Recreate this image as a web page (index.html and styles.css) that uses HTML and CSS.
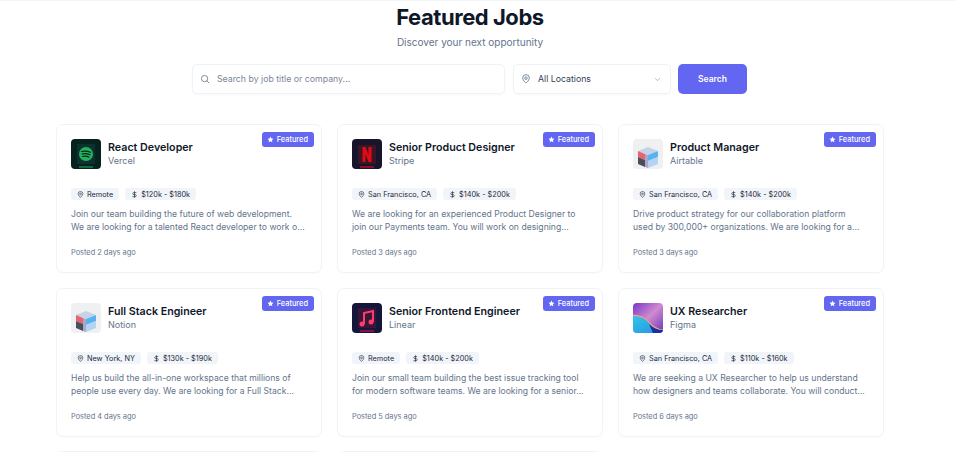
FILE: index.html
```html
<!DOCTYPE html>
<html lang="en">
<head>
<meta charset="utf-8">
<title>Featured Jobs</title>
<link rel="stylesheet" href="styles.css">
</head>
<body>
<svg class="defs" width="0" height="0" aria-hidden="true">
  <defs>
    <symbol id="pin" viewBox="0 0 24 24"><path d="M12 22s8-6.6 8-12.5a8 8 0 0 0-16 0C4 15.400 12 22 12 22z" fill="none" stroke="currentColor" stroke-width="2"/><circle cx="12" cy="10" r="3" fill="none" stroke="currentColor" stroke-width="2"/></symbol>
    <symbol id="dollar" viewBox="0 0 24 24"><path d="M12 2v20M17 5.500H9.500a3.500 3.500 0 0 0 0 7h5a3.500 3.500 0 0 1 0 7H6" fill="none" stroke="currentColor" stroke-width="2.200" stroke-linecap="round"/></symbol>
    <symbol id="star" viewBox="0 0 24 24"><path d="M12 2l3.100 6.600 7.200.9-5.300 5 1.400 7.200L12 18.200l-6.400 3.500L7 14.500l-5.300-5 7.200-.9z" fill="currentColor"/></symbol>
    <symbol id="cube" viewBox="0 0 30 30">
      <rect width="30" height="30" fill="#eff0f2"/>
      <g transform="translate(0 3)">
        <path d="M15 5l10 4-10 4-10-4z" fill="#c5d3e8"/>
        <path d="M5 9l7 3v6l-7-3z" fill="#e8636c"/>
        <path d="M5 15l7 3v7l-7-3z" fill="#4a4d5a"/>
        <path d="M12 12l3 1v13l-3-1z" fill="#a9a6d0"/>
        <path d="M15 13l10-4v6l-10 4z" fill="#58b2f2"/>
        <path d="M15 19l10-4v7l-10 4z" fill="#b4d4f2"/>
      </g>
    </symbol>
    <linearGradient id="figma-sky" x1="0" y1="0" x2="1" y2="1"><stop offset="0" stop-color="#7a34c8"/><stop offset=".5" stop-color="#d08ad0"/><stop offset="1" stop-color="#6a35b8"/></linearGradient>
    <linearGradient id="figma-sea" x1="0" y1="0" x2="1" y2="1"><stop offset="0" stop-color="#2fc8ea"/><stop offset="1" stop-color="#2a90e0"/></linearGradient>
  </defs>
</svg>

<main class="page">
  <header class="hero">
    <h1 class="hero-title">Featured Jobs</h1>
    <p class="hero-sub">Discover your next opportunity</p>
  </header>

  <form class="filters">
    <div class="field field-search">
      <svg class="field-icon" viewBox="0 0 24 24"><circle cx="11" cy="11" r="7.500" fill="none" stroke="currentColor" stroke-width="2"/><path d="M21 21l-4.500-4.500" fill="none" stroke="currentColor" stroke-width="2" stroke-linecap="round"/></svg>
      <span class="placeholder">Search by job title or company...</span>
    </div>
    <div class="field field-location">
      <svg class="field-icon"><use href="#pin"/></svg>
      <span class="select-value">All Locations</span>
      <svg class="chevron" viewBox="0 0 24 24"><path d="M6 9l6 6 6-6" fill="none" stroke="currentColor" stroke-width="2" stroke-linecap="round" stroke-linejoin="round"/></svg>
    </div>
    <button class="search-btn" type="button">Search</button>
  </form>

  <section class="grid">
    <article class="card">
      <span class="badge"><svg class="badge-star"><use href="#star"/></svg>Featured</span>
      <div class="card-head">
        <svg class="logo" viewBox="0 0 30 30"><rect width="30" height="30" fill="#07211f"/><rect x="6" y="5" width="18" height="20" fill="#0b3230"/><rect x="8" y="27" width="14" height="2" fill="#0f6b3c"/><circle cx="15" cy="15" r="7" fill="#22b45a"/><path d="M10.500 12.500q4.500-1.200 9 .8M11 15q4-1 8 .8M11.500 17.500q3.500-.8 6.500.7" fill="none" stroke="#07211f" stroke-width="1.200" stroke-linecap="round"/></svg>
        <div class="head-text"><h2 class="job-title">React Developer</h2><p class="company">Vercel</p></div>
      </div>
      <div class="tags">
        <span class="tag"><svg class="tag-icon"><use href="#pin"/></svg>Remote</span>
        <span class="tag"><svg class="tag-icon"><use href="#dollar"/></svg>$120k - $180k</span>
      </div>
      <p class="desc">Join our team building the future of web development. We are looking for a talented React developer to work o...</p>
      <p class="posted">Posted 2 days ago</p>
    </article>

    <article class="card">
      <span class="badge"><svg class="badge-star"><use href="#star"/></svg>Featured</span>
      <div class="card-head">
        <svg class="logo" viewBox="0 0 30 30"><rect width="30" height="30" fill="#17152b"/><rect x="6" y="6" width="18" height="19" fill="#3a1626"/><rect x="8" y="27" width="14" height="2" fill="#8a1020"/><path d="M10.500 8h3l3 8V8h3v15h-3l-3-8v8h-3z" fill="#e50914"/></svg>
        <div class="head-text"><h2 class="job-title">Senior Product Designer</h2><p class="company">Stripe</p></div>
      </div>
      <div class="tags">
        <span class="tag"><svg class="tag-icon"><use href="#pin"/></svg>San Francisco, CA</span>
        <span class="tag"><svg class="tag-icon"><use href="#dollar"/></svg>$140k - $200k</span>
      </div>
      <p class="desc">We are looking for an experienced Product Designer to join our Payments team. You will work on designing...</p>
      <p class="posted">Posted 3 days ago</p>
    </article>

    <article class="card">
      <span class="badge"><svg class="badge-star"><use href="#star"/></svg>Featured</span>
      <div class="card-head">
        <svg class="logo"><use href="#cube"/></svg>
        <div class="head-text"><h2 class="job-title">Product Manager</h2><p class="company">Airtable</p></div>
      </div>
      <div class="tags">
        <span class="tag"><svg class="tag-icon"><use href="#pin"/></svg>San Francisco, CA</span>
        <span class="tag"><svg class="tag-icon"><use href="#dollar"/></svg>$140k - $200k</span>
      </div>
      <p class="desc">Drive product strategy for our collaboration platform used&nbsp;by 300,000+ organizations. We are looking for a...</p>
      <p class="posted">Posted 3 days ago</p>
    </article>

    <article class="card">
      <span class="badge"><svg class="badge-star"><use href="#star"/></svg>Featured</span>
      <div class="card-head">
        <svg class="logo"><use href="#cube"/></svg>
        <div class="head-text"><h2 class="job-title">Full Stack Engineer</h2><p class="company">Notion</p></div>
      </div>
      <div class="tags">
        <span class="tag"><svg class="tag-icon"><use href="#pin"/></svg>New York, NY</span>
        <span class="tag"><svg class="tag-icon"><use href="#dollar"/></svg>$130k - $190k</span>
      </div>
      <p class="desc">Help us build the all-in-one workspace that millions of people use every day. We are looking for a Full Stack...</p>
      <p class="posted">Posted 4 days ago</p>
    </article>

    <article class="card">
      <span class="badge"><svg class="badge-star"><use href="#star"/></svg>Featured</span>
      <div class="card-head">
        <svg class="logo" viewBox="0 0 30 30"><rect width="30" height="30" fill="#14163a"/><rect x="6" y="5" width="18" height="20" fill="#3a1636"/><rect x="8" y="27" width="14" height="2" fill="#8a1048"/><path d="M12 21V10l9-2v11" fill="none" stroke="#ff3a6e" stroke-width="2"/><circle cx="10" cy="21" r="2.500" fill="#ff3a6e"/><circle cx="19" cy="19" r="2.500" fill="#ff3a6e"/></svg>
        <div class="head-text"><h2 class="job-title">Senior Frontend Engineer</h2><p class="company">Linear</p></div>
      </div>
      <div class="tags">
        <span class="tag"><svg class="tag-icon"><use href="#pin"/></svg>Remote</span>
        <span class="tag"><svg class="tag-icon"><use href="#dollar"/></svg>$140k - $200k</span>
      </div>
      <p class="desc">Join our small team building the best issue tracking tool for modern software teams. We are looking for a senior...</p>
      <p class="posted">Posted 5 days ago</p>
    </article>

    <article class="card">
      <span class="badge"><svg class="badge-star"><use href="#star"/></svg>Featured</span>
      <div class="card-head">
        <svg class="logo" viewBox="0 0 30 30"><rect width="30" height="30" fill="url(#figma-sky)"/><path d="M0 12q10 1 16 8t14 8v2H0z" fill="url(#figma-sea)"/><path d="M0 11.500q10 0 16 7t14 8v1.500q-9-1-14-8T0 13z" fill="#f0a080"/><path d="M16 21q6 6 14 6v3H20z" fill="#1c2f9e"/></svg>
        <div class="head-text"><h2 class="job-title">UX Researcher</h2><p class="company">Figma</p></div>
      </div>
      <div class="tags">
        <span class="tag"><svg class="tag-icon"><use href="#pin"/></svg>San Francisco, CA</span>
        <span class="tag"><svg class="tag-icon"><use href="#dollar"/></svg>$110k - $160k</span>
      </div>
      <p class="desc">We are seeking a UX Researcher to help us understand how designers and teams collaborate. You will conduct...</p>
      <p class="posted">Posted 6 days ago</p>
    </article>

    <article class="card card-empty"></article>
    <article class="card card-empty"></article>
  </section>
</main>
</body>
</html>
```

FILE: styles.css
```css
html, body {
  margin: 0;
  height: 452px;
  overflow: hidden;
  background: #fff;
}

body {
  box-sizing: border-box;
  border-top: 1px solid #f3f4f6;
  padding-right: 15px;
  font-family: Inter, "Liberation Sans", sans-serif;
  color: #0f172a;
}

.defs {
  display: block;
  height: 0;
}

.page {
  width: 828px;
  margin: 0 auto;
}

.hero {
  text-align: center;
  padding-top: 2px;
}

.hero-title {
  margin: 0;
  font-size: 22px;
  line-height: 29px;
  font-weight: 700;
  letter-spacing: -0.45px;
  color: #0f172a;
}

.hero-sub {
  margin: 3px 0 0;
  font-size: 10px;
  line-height: 14px;
  color: #64748b;
}

.filters {
  display: flex;
  justify-content: center;
  gap: 7px;
  margin-top: 15px;
  padding-right: 1px;
  height: 31px;
}

.field {
  display: flex;
  align-items: center;
  box-sizing: border-box;
  height: 30px;
  border: 1px solid #f0f2f5;
  border-radius: 5px;
  background: #fff;
  box-shadow: 0 1px 2px rgba(15, 23, 42, 0.03);
}

.field-search {
  width: 313px;
  margin-right: 1px;
  padding-left: 7px;
}

.field-location {
  width: 158px;
  padding: 0 8px 0 7px;
}

.field-icon {
  width: 10px;
  height: 10px;
  flex: none;
  color: #64748b;
}

.placeholder {
  margin-left: 7px;
  font-size: 8.750px;
  color: #7b8698;
}

.select-value {
  flex: 1;
  margin-left: 7px;
  font-size: 8.750px;
  color: #334155;
}

.chevron {
  width: 9px;
  height: 9px;
  color: #94a3b8;
}

.search-btn {
  width: 69px;
  height: 30px;
  border: 0;
  border-radius: 5px;
  padding: 0;
  background: #6366f1;
  color: #fff;
  font: 600 8.500px Inter, "Liberation Sans", sans-serif;
}

.grid {
  display: grid;
  grid-template-columns: repeat(3, 266px);
  grid-auto-rows: 149px;
  column-gap: 15px;
  row-gap: 15px;
  margin-top: 29px;
}

.card {
  position: relative;
  box-sizing: border-box;
  border: 1px solid #f1f3f6;
  border-radius: 7px;
  padding: 14px 14px 0;
  background: #fff;
  box-shadow: 0 1px 2px rgba(15, 23, 42, 0.02);
}

.card-empty {
  margin-top: -1px;
}

.badge {
  position: absolute;
  top: 7px;
  right: 7.500px;
  display: flex;
  align-items: center;
  gap: 3px;
  height: 15px;
  padding: 0 5.500px 0 5px;
  border-radius: 3px;
  background: #6366f1;
  color: #fff;
  font-size: 7.400px;
  font-weight: 500;
}

.badge-star {
  width: 7px;
  height: 7px;
}

.card-head {
  display: flex;
  align-items: center;
  gap: 7px;
}

.logo {
  width: 30px;
  height: 30px;
  flex: none;
  border-radius: 4px;
}

.head-text {
  min-width: 0;
  padding-bottom: 2px;
}

.job-title {
  margin: 0;
  font-size: 10.700px;
  line-height: 14px;
  font-weight: 600;
  color: #0f172a;
}

.company {
  margin: 0;
  font-size: 9px;
  line-height: 11px;
  color: #64748b;
}

.tags {
  display: flex;
  gap: 6px;
  margin-top: 19px;
}

.tag {
  display: flex;
  align-items: center;
  gap: 3px;
  height: 12px;
  padding: 0 6px;
  border-radius: 3px;
  background: #f1f5f9;
  color: #1e293b;
  font-size: 7.300px;
  white-space: nowrap;
}

.tag-icon {
  width: 7px;
  height: 7px;
}

.desc {
  margin: 8px 0 0;
  font-size: 8.650px;
  line-height: 13px;
  color: #64748b;
}

.posted {
  margin: 14px 0 0;
  font-size: 7.400px;
  line-height: 10px;
  color: #64748b;
}
```
